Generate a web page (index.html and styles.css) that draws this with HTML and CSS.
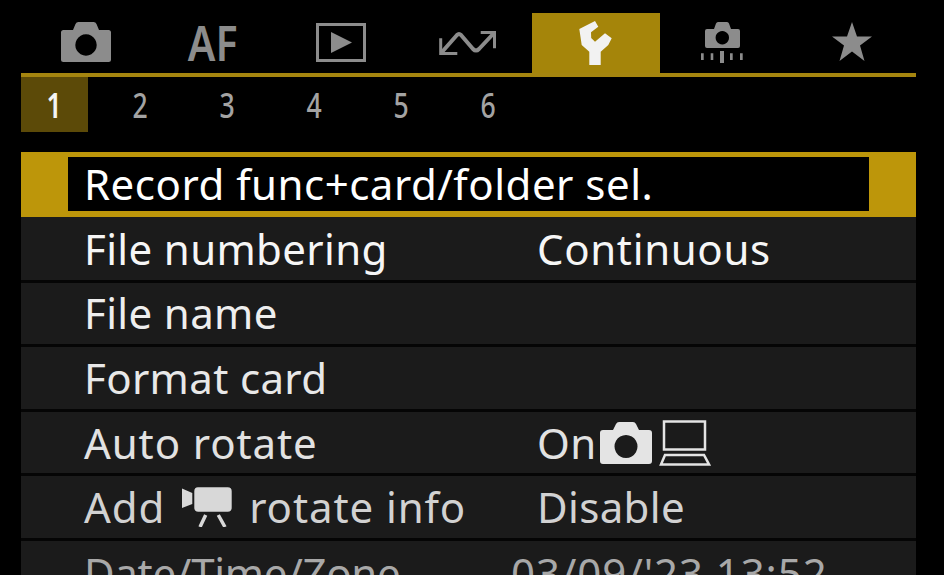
FILE: index.html
```html
<!DOCTYPE html>
<html lang="en">
<head>
  <meta charset="UTF-8">
  <title>Set-up menu</title>
  <link rel="stylesheet" href="styles.css">
</head>
<body>
  <div class="screen">
    <div class="tabs">
      <div class="tab shift-right">
        <svg width="50" height="40" viewBox="0 0 50 40"><path class="grey" fill-rule="evenodd" d="M2.500 8H12l2.500-6q.8-2 3-2h15q2.200 0 3 2L38 8h9.500Q50 8 50 10.500v27q0 2.500-2.500 2.500h-45Q0 40 0 37.500v-27Q0 8 2.500 8zM25 12.300a10.700 10.700 0 1 0 .01 0z"/></svg>
      </div>
      <div class="tab"><span class="tab-text">AF</span></div>
      <div class="tab">
        <svg width="50" height="39" viewBox="0 0 50 39"><rect class="line" x="1.500" y="1.500" width="47" height="36" fill="none" stroke-width="3"/><path class="grey" d="M15 9l21 10.500L15 30z"/></svg>
      </div>
      <div class="tab">
        <svg width="60" height="30" viewBox="0 0 60 30"><path class="line" fill="none" stroke-width="4" stroke-linejoin="round" d="M4 25L19 8q2-2 4 0l12 14q3 3 6 0L56 6"/><path class="line" fill="none" stroke-width="3" d="M2.700 11.300V26.500H19.300M42.700 5.500H56.500V21.300"/></svg>
      </div>
      <div class="tab active">
        <svg width="36" height="46" viewBox="0 0 36 46"><path fill="#f2f2f2" d="M1.300 9L17 1l3.300 5.700-7.300 5.600.2 5.700 3.800 3.700L27 13.300l6.700 5-3.400 6.700-7.600 6.700V45H11.300V31.700L3.700 25z"/></svg>
      </div>
      <div class="tab lift">
        <svg width="46" height="43" viewBox="0 0 46 43"><path class="grey" fill-rule="evenodd" d="M6 9h7l2-5.500Q15.600 2 17 2h9q1.500 0 2 1.500L30 9h7q2 0 2 2v15q0 2-2 2H6q-2 0-2-2V11q0-2 2-2zM21.300 11a6.700 6.700 0 1 0 .01 0z"/><path class="grey" d="M0 33.300h2.700V40H0zM9.700 33.300h2.600V40H9.700zM19 31h4v12h-4zM29 33.300h2.700V40H29zM39 33.300h2.700V40H39z"/></svg>
      </div>
      <div class="tab">
        <svg width="42" height="40" viewBox="0 0 42 40"><path class="grey" d="M21 0l5 14.500h15l-12 9 4.500 15.500L21 29.500 8.500 39 13 23.500l-12-9h15z"/></svg>
      </div>
    </div>

    <div class="pages">
      <div class="page current"><span class="digit">1</span></div>
      <div class="page"><span class="digit">2</span></div>
      <div class="page"><span class="digit">3</span></div>
      <div class="page"><span class="digit">4</span></div>
      <div class="page"><span class="digit">5</span></div>
      <div class="page"><span class="digit">6</span></div>
    </div>

    <div class="menu">
      <div class="row selected">
        <div class="row-inner">Record func+card/folder sel.</div>
      </div>
      <div class="row row-2">
        <span>File numbering</span>
        <span class="continuous">Continuous</span>
      </div>
      <div class="row row-3">
        <span>File name</span>
      </div>
      <div class="row row-4">
        <span>Format card</span>
      </div>
      <div class="row row-5">
        <span class="wide">Auto rotate</span>
        <span class="value-icons">On
          <svg class="cam" width="54" height="42" viewBox="0 0 54 42"><path fill="#e4e4e4" fill-rule="evenodd" d="M4 8h10l3-6q1-2 3-2h14q2 0 3 2l3 6h10q3 0 3 3v28q0 3-3 3H4q-3 0-3-3V11q0-3 3-3zM27 13a11.500 11.500 0 1 0 .01 0z"/></svg>
          <svg class="laptop" width="52" height="46" viewBox="0 0 52 46"><g fill="none" stroke="#e4e4e4" stroke-width="2.500"><rect x="5" y="1.500" width="41" height="28"/><path d="M6 35h39l5 9.500H2z"/></g></svg>
        </span>
      </div>
      <div class="row row-6">
        <span class="label-icon wide">Add
          <svg width="50" height="40" viewBox="0 0 50 40"><path fill="#d8d8d8" d="M0 1.500L10.300 6v11L0 21zM16 .3h29.700q4 0 4 4v16.400q0 4-4 4H16.300q-4 0-4-4V4.300q0-4 3.700-4z"/><path fill="none" stroke="#d8d8d8" stroke-width="3.500" d="M23.700 28L18 40M36.300 28L43 40"/></svg>
          rotate info</span>
        <span>Disable</span>
      </div>
      <div class="row row-7">
        <span class="tight">Date/Time/Zone</span>
        <span class="date">03/09/'23 13:52</span>
      </div>
    </div>
  </div>
</body>
</html>
```

FILE: styles.css
```css
html, body {
  margin: 0;
  height: 100%;
  overflow: hidden;
  background: #000;
}
.screen {
  font-family: "Noto Sans", "Open Sans", sans-serif;
  width: 895px;
  margin-left: 21px;
  padding-top: 13px;
}
.grey {
  fill: #8c8c8c;
}
.line {
  stroke: #8c8c8c;
}
.tabs {
  display: grid;
  grid-template-columns: repeat(7, 1fr);
  height: 60px;
  border-bottom: 4px solid #a5850f;
}
.tab {
  display: flex;
  align-items: center;
  justify-content: center;
  padding-bottom: 2px;
  box-sizing: border-box;
  height: 60px;
}
.shift-right {
  padding-left: 3px;
}
.lift {
  padding-bottom: 3px;
}
.tab-text {
  color: #8c8c8c;
  font-size: 49px;
  font-weight: 600;
  line-height: 1;
  transform: scaleX(0.84);
}
.active {
  background: #a5850a;
  padding-bottom: 0;
}
.pages {
  display: flex;
  height: 55px;
  margin-bottom: 20px;
}
.page {
  width: 87px;
  display: flex;
  align-items: center;
  justify-content: center;
  color: #a3a3a3;
  font-size: 35px;
  font-weight: 500;
}
.digit {
  transform: scaleX(0.76);
}
.current {
  width: 67px;
  margin-right: 9px;
  background: #5c4a08;
  color: #f4f4f4;
  font-weight: 600;
}
.menu {
  display: flex;
  flex-direction: column;
}
.row {
  display: grid;
  grid-template-columns: 453px 1fr;
  align-items: center;
  box-sizing: border-box;
  height: 64.6px;
  padding-left: 63px;
  background: #1b1b1b;
  border-bottom: 3px solid #050505;
  font-size: 42px;
  line-height: 1;
  letter-spacing: 0.35px;
  white-space: nowrap;
}
.selected {
  display: block;
  height: 65px;
  padding: 5px 47px 6px;
  background: #bd960a;
  border-bottom: 0;
}
.row-inner {
  background: #000;
  color: #fff;
  height: 100%;
  padding-left: 16px;
  display: flex;
  align-items: center;
  letter-spacing: 0.5px;
}
.row-2 {
  color: #f6f6f6;
  height: 65.6px;
  padding-top: 1px;
}
.row-3 { color: #eeeeee; }
.row-4 { color: #e8e8e8; }
.row-5 { color: #e2e2e2; }
.row-6 { color: #d2d2d2; }
.row-7 { color: #a8a8a8; border-bottom: 0; }
.wide {
  letter-spacing: 0.9px;
}
.tight {
  letter-spacing: -0.3px;
}
.continuous {
  letter-spacing: 0.65px;
}
.value-icons,
.label-icon {
  display: flex;
  align-items: center;
  gap: 9px;
}
.label-icon {
  gap: 17px;
}
.cam {
  margin-left: -6px;
}
.laptop {
  margin-left: -3px;
}
.date {
  margin-left: -26px;
  letter-spacing: 0.9px;
}
```
